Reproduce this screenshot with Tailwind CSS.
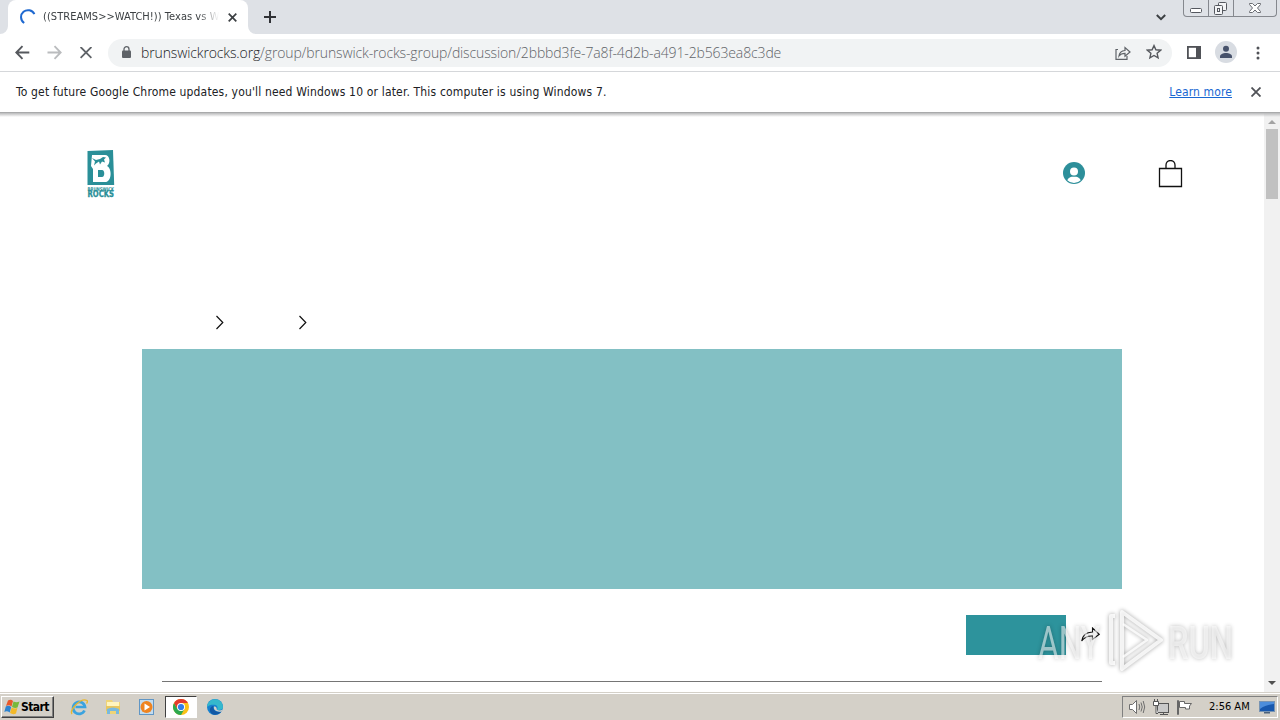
<!DOCTYPE html>
<html lang="en">

<head>
  <meta charset="UTF-8" />
  <meta name="viewport" content="width=device-width, initial-scale=1.0" />
  <title>Brunswick Rocks — Discussion</title>
  <script src="https://cdn.jsdelivr.net/npm/@tailwindcss/browser@4"></script>
</head>

<body class="flex h-[720px] w-[1280px] flex-col overflow-hidden bg-white font-['DejaVu_Sans_Condensed','DejaVu_Sans',sans-serif] text-[12px] text-[#202124]">

  <!-- Tab strip -->
  <header class="relative flex h-[34px] shrink-0 items-start bg-[#dee1e6] pl-2">
    <div class="relative flex h-[34px] w-[240px] items-center rounded-t-lg bg-white pl-3">
      <svg class="absolute -left-2 bottom-0 h-2 w-2" viewBox="0 0 8 8" fill="#fff"><path d="M8 0v8H0a8 8 0 0 0 8-8"/></svg>
      <svg class="absolute -right-2 bottom-0 h-2 w-2" viewBox="0 0 8 8" fill="#fff"><path d="M0 0v8h8a8 8 0 0 1-8-8"/></svg>
      <svg class="h-4 w-4 shrink-0" viewBox="0 0 16 16" fill="none" stroke="#1f69d0" stroke-width="2"><path d="M4.2 14A7 7 0 1 1 14.4 5.2"/></svg>
      <div class="ml-[7px] w-[176px] overflow-hidden whitespace-nowrap mask-r-from-88% mask-r-to-100% text-[11px] leading-4 tracking-[0.04px] text-[#3c4043]">((STREAMS&gt;&gt;WATCH!)) Texas vs W</div>
      <svg class="ml-[9px] h-[9px] w-[9px] shrink-0" viewBox="0 0 9 9" stroke="#3c4043" stroke-width="1.7"><path d="M.7.7l7.6 7.6M8.3.7L.7 8.3"/></svg>
    </div>
    <svg class="ml-4 mt-[11px] h-3 w-3" viewBox="0 0 12 12" stroke="#303236" stroke-width="2"><path d="M6 0v12M0 6h12"/></svg>
    <svg class="ml-auto mr-[17px] mt-[14px] h-[7px] w-[10px]" viewBox="0 0 10 7" fill="none" stroke="#3c4043" stroke-width="2"><path d="M.8 1L5 5.2 9.2 1"/></svg>
    <div class="mr-[3px] flex h-[17px] w-[94px] rounded-b-[4px] border border-t-0 border-[#85888e] bg-[#dfe2e7]">
      <div class="w-[25px] border-r border-[#85888e]">
        <svg class="h-4 w-6" viewBox="0 0 24 16" fill="#fff" stroke="#55585f"><rect x="6.500" y="8.500" width="11" height="4" rx="1"/></svg>
      </div>
      <div class="w-[25px] border-r border-[#85888e]">
        <svg class="h-4 w-6" viewBox="0 0 24 16" fill="#f3f4f6" stroke="#55585f"><rect x="9.500" y="2.500" width="8" height="8" rx="1"/><rect x="5.500" y="5.500" width="8" height="9" rx="1"/><rect x="8.500" y="8.500" width="2" height="3"/></svg>
      </div>
      <svg class="h-4 w-[42px]" viewBox="0 0 42 16" fill="#fff" stroke="#6a6d73"><path d="M15.500 3.500h3l2.500 2.500 2.500-2.500h3v1L23.500 8l3 3.500v1h-3L21 10l-2.500 2.500h-3v-1l3-3.500-3-3.500z"/></svg>
    </div>
  </header>

  <!-- Toolbar -->
  <div class="flex h-[38px] shrink-0 items-center border-b border-[#d5d7da] pl-[15px] pr-[20px]">
    <svg class="h-4 w-[15px]" viewBox="0 0 15 16" fill="none" stroke="#55585d" stroke-width="1.900"><path d="M14.300 7.500H1.500M7.500 1.200L1.300 7.500l6.200 6.300"/></svg>
    <svg class="ml-[17px] h-4 w-[15px]" viewBox="0 0 15 16" fill="none" stroke="#babcbe" stroke-width="1.800"><path d="M.5 7.500h13M7.500 1.200L13.700 7.500l-6.200 6.300"/></svg>
    <svg class="ml-[18px] h-3 w-3" viewBox="0 0 12 12" stroke="#5f6368" stroke-width="1.800"><path d="M.6 0l10.800 10.800M11.400 0L.6 10.800"/></svg>
    <div class="ml-4 flex h-7 w-[1064px] items-center rounded-full bg-[#f1f3f4] pl-[14px] pr-[11px]">
      <svg class="h-3 w-[9px] shrink-0 -translate-y-px" viewBox="0 0 9 12"><path d="M2 5V3.200a2.500 2.500 0 0 1 5 0V5" fill="none" stroke="#5f6368" stroke-width="1.300"/><rect y="4.500" width="9" height="7.500" rx="1" fill="#5f6368"/></svg>
      <div class="ml-[10px] whitespace-nowrap font-['Open_Sans','Noto_Sans',sans-serif] text-[14px] font-light tracking-[-0.129px] text-[#5f6368]"><span class="text-[#202124]">brunswickrocks.org</span>/group/brunswick-rocks-group/discussion/2bbbd3fe-7a8f-4d2b-a491-2b563ea8c3de</div>
      <svg class="ml-auto h-[14px] w-4 shrink-0" viewBox="0 0 16 14" fill="none" stroke="#5f6368" stroke-width="1.200"><path d="M3 3.500H1v9.800h11V10M4 10c.4-3.400 2-5.200 6-5.500V1.500L15 6l-5 4.200V7.400C7.400 7.400 5.500 8 4 10z"/></svg>
      <svg class="ml-6 -mr-[10px] h-4 w-4 shrink-0 -translate-x-[9px] -translate-y-px" viewBox="0 0 16 16" fill="none" stroke="#55585d" stroke-width="1.400"><path d="M8 1.600l1.900 4.200 4.700.4-3.500 3.100 1 4.600L8 11.500l-4.100 2.400 1-4.600L1.400 6.200l4.700-.4z"/></svg>
    </div>
    <svg class="ml-[15px] h-[13px] w-[14px]" viewBox="0 0 14 13"><rect x=".9" y=".9" width="12.200" height="11.200" fill="none" stroke="#505257" stroke-width="1.800"/><rect x="9" width="5" height="13" fill="#505257"/></svg>
    <svg class="ml-[14px] h-[22px] w-[22px] -translate-y-px" viewBox="0 0 22 22"><circle cx="11" cy="11" r="11" fill="#d8dce2"/><circle cx="11" cy="7.800" r="3" fill="#47526b"/><path d="M5 17v-1.500c0-2.300 3-3.500 6-3.500s6 1.200 6 3.500V17z" fill="#47526b"/></svg>
    <svg class="ml-auto h-[14px] w-[4px]" viewBox="0 0 4 14" fill="#505257"><circle cx="2" cy="2" r="1.500"/><circle cx="2" cy="7" r="1.500"/><circle cx="2" cy="12" r="1.500"/></svg>
  </div>

  <!-- Update notice -->
  <div class="flex h-[40px] shrink-0 items-center pl-4 pr-[19px]">
    <p class="whitespace-nowrap tracking-[0.165px]">To get future Google Chrome updates, you'll need Windows 10 or later. This computer is using Windows 7.</p>
    <a href="#" class="ml-auto whitespace-nowrap tracking-[0.12px] text-[#1967d2] underline">Learn more</a>
    <svg class="ml-[19px] h-[10px] w-[10px]" viewBox="0 0 10 10" stroke="#505257" stroke-width="1.800"><path d="M.5.5l9 9M9.500.5l-9 9"/></svg>
  </div>

  <!-- Page -->
  <div class="relative flex h-[580px] shrink-0 overflow-hidden border-t border-[#a9aaab]">
    <div class="absolute inset-x-0 top-0 h-[4px] bg-linear-to-b from-[#b9babb] to-transparent"></div>
    <main class="w-[1264px]">
      <div class="flex h-[122px] items-center pl-[87px] pr-[81px]">
        <svg class="h-[48px] w-[28px] overflow-visible" viewBox="0 0 28 48">
          <path d="M.5 1L26 0l1.200 35H.5z" fill="#2a8f98"/>
          <path d="M5 5h13c5 0 6 8 2 11 5 2 5 15-1 16H6V19l-2-3z" fill="#fff"/>
          <path d="M11 20h4c3 0 3 7 0 7h-4z" fill="#2a8f98"/>
          <path d="M5 8l4 2 4-1 3-2 3 .5-2 2 1 3-3-1-2 3-1-3-3 2-2 2 1-4z" fill="#2a8f98"/>
          <text x=".5" y="40.500" font-size="5.200" font-weight="bold" textLength="26.500" lengthAdjust="spacingAndGlyphs" fill="#2a8f98" font-family="DejaVu Sans">BRUNSWICK</text>
          <text x=".5" y="47" font-size="8" font-weight="bold" textLength="26.500" lengthAdjust="spacingAndGlyphs" fill="#2a8f98" stroke="#2a8f98" stroke-width=".3" font-family="DejaVu Sans">ROCKS</text>
        </svg>
        <svg class="ml-auto h-[22px] w-[22px] -translate-y-px" viewBox="0 0 22 22"><circle cx="11" cy="11" r="11" fill="#2d8f9a"/><circle cx="11" cy="9.500" r="4" fill="#fff"/><path d="M4.300 18.200c2-3.600 4.200-3.400 6.700-3.400s4.700-.2 6.700 3.400A9.800 9.800 0 0 1 11 21a9.800 9.800 0 0 1-6.700-2.800z" fill="#fff"/></svg>
        <svg class="ml-[73px] h-7 w-[25px]" viewBox="0 0 25 28" fill="none" stroke="#111" stroke-width="1.300"><path d="M1.500 8.500h22v18h-22zM8 8V5a4.500 4.500 0 0 1 9 0v3"/></svg>
      </div>

      <!-- Breadcrumbs -->
      <div class="flex h-[114px] items-end gap-[75px] pb-[19px] pl-[216px]">
        <svg class="h-[15px] w-2" viewBox="0 0 8 15" fill="none" stroke="#111" stroke-width="1.200"><path d="M.5 1l6.300 6.500L.5 14"/></svg>
        <svg class="h-[15px] w-2" viewBox="0 0 8 15" fill="none" stroke="#111" stroke-width="1.200"><path d="M.5 1l6.300 6.500L.5 14"/></svg>
      </div>

      <!-- Group cover -->
      <div class="ml-[142px] h-[240px] w-[980px] bg-[#83c0c4]"></div>
      <div class="ml-[162px] flex h-[93px] w-[940px] items-start border-b border-[#757575] pt-[26px]">
        <button class="ml-[804px] h-10 w-[100px] bg-[#2d939c]" aria-label="Join"></button>
        <svg class="ml-[15px] mt-3 h-[15px] w-[19px]" viewBox="0 0 19 15" fill="#fff" stroke="#111" stroke-width="1.100"><path d="M.7 14C1.500 8.500 5 5.200 11.500 5V1l6.700 6.300-6.700 5.200V9C7 8.800 3.500 10 .7 14z"/></svg>
      </div>
    </main>

    <!-- Scrollbar -->
    <aside class="flex w-4 flex-col items-center bg-[#f1f1f1]">
      <svg class="mt-[7px] h-1 w-2" viewBox="0 0 8 4" fill="#a3a3a3"><path d="M0 4l4-4 4 4z"/></svg>
      <div class="mt-[5px] h-[70px] w-3 bg-[#c1c1c1]"></div>
      <svg class="mb-[7px] mt-auto h-1 w-2" viewBox="0 0 8 4" fill="#505050"><path d="M0 0l4 4 4-4z"/></svg>
    </aside>

    <!-- Watermark -->
    <svg class="absolute left-[1030px] top-[492px] h-[72px] w-[220px] drop-shadow-[0_0_2px_rgba(0,0,0,0.45)]" viewBox="0 0 220 72" fill="#fff" fill-opacity=".55" font-family="Roboto, sans-serif" font-size="46">
      <text x="8" y="54" textLength="62" lengthAdjust="spacingAndGlyphs">ANY</text>
      <text x="138" y="54" font-weight="500" textLength="65" lengthAdjust="spacingAndGlyphs">RUN</text>
      <g fill="none" stroke="#fff" stroke-opacity=".8" stroke-width="4" stroke-linejoin="round">
        <path d="M85 11h-4v47h4M92 7l39 28-39 29z"/>
        <path d="M93 19l24 16-24 17" stroke-width="2.500"/>
      </g>
    </svg>
  </div>

  <!-- Taskbar -->
  <footer class="flex h-[28px] shrink-0 items-center border-t border-[#d4d0c8] bg-[#d4d0c8] pl-px pr-[2px] text-black shadow-[inset_0_1px_0_#fff]">
    <button class="mt-px flex h-[22px] w-[53px] items-center border border-[#404040] border-l-white border-t-white bg-[#d4d0c8] pl-[2px] shadow-[inset_-1px_-1px_0_#808080]">
      <svg class="h-4 w-4 shrink-0" viewBox="0 0 16 16"><path d="M4 1.500q3-1.500 5 .5L7.500 7.500Q5 5.500 2 7z" fill="#e8582a"/><path d="M9.500 2.500q3 1.500 6 0L13.500 8.500Q11 9.500 8 8z" fill="#78b83a"/><path d="M1.800 7.500Q4.500 6 7.200 8l-1.500 5.500Q3 11.500 .3 13z" fill="#2c83d0"/><path d="M7.700 8.500q3 1.500 5.700.5L12 14.500q-3 1.500-6-.5z" fill="#f3b929"/></svg>
      <span class="ml-px text-[12px] font-bold tracking-[-0.6px]">Start</span>
    </button>
    <svg class="ml-4 h-[18px] w-[18px]" viewBox="0 0 18 18" fill="none"><path d="M14.500 12.500A6 6 0 1 1 15 9H5.500" stroke="#3ba3df" stroke-width="2.700"/><path d="M2 16C-1 12 11-1 17 2.500c.8 1 .3 2-.5 3" stroke="#e9b72f" stroke-width="1.300"/></svg>
    <svg class="ml-[16px] h-[18px] w-[18px]" viewBox="0 0 18 18"><path d="M2 2h6l1 2h7v12H2z" fill="#efd477"/><path d="M3 4h12v5H3z" fill="#fff4bd"/><path d="M2 8h14v5H2z" fill="#e8c65f"/><path d="M3 16v-5q6-3 12 0v5h-3v-3H6v3z" fill="#78b9df"/></svg>
    <svg class="ml-[16px] h-[18px] w-[18px]" viewBox="0 0 18 18"><rect x="1.500" y="1.500" width="14" height="15" fill="#c3dcef" stroke="#6096c5"/><circle cx="8.500" cy="9" r="6" fill="#ef8420"/><path d="M6.500 5.500L12 9l-5.500 3.500z" fill="#fff"/></svg>
    <div class="ml-[9px] mt-px flex h-[22px] w-8 items-center justify-center border border-[#404040] border-b-white border-r-white bg-white">
      <svg class="h-4 w-4" viewBox="0 0 16 16"><circle cx="8" cy="8" r="8" fill="#fbc116"/><path d="M1.070 4A8 8 0 0 0 8 16l3.500-6H4.500z" fill="#2da94f"/><path d="M1.070 4A8 8 0 0 1 14.930 4H8l-3.500 6z" fill="#e33b2e"/><circle cx="8" cy="8" r="4" fill="#fff"/><circle cx="8" cy="8" r="3.100" fill="#327ee8"/></svg>
    </div>
    <svg class="ml-[9px] h-[18px] w-[18px]" viewBox="0 0 18 18"><circle cx="9" cy="9" r="8" fill="#1681cf"/><path d="M1.300 7A8 8 0 0 1 17 9c0 3-3.500 3.500-6 2.700 1-1.200 1-4.700-2.500-5C5 6.500 3 7 1.300 9z" fill="#35b8cc"/><path d="M7.500 8c-1 4 3 7 8 5.500C11 19 3 17 4 11c.3-1.500 1.500-3 3.500-3z" fill="#1258a5"/><path d="M8 8.500c2-.5 3 1.500 2.700 3 1.800 1.500 4.500 1 6 0l-1 2C11 14.500 7 12 8 8.500z" fill="#d4d0c8"/></svg>

    <!-- Tray -->
    <div class="ml-auto mt-px flex h-[22px] w-[156px] items-center border border-[#808080] border-b-white border-r-white pl-[5px]">
      <svg class="h-[16px] w-[18px]" viewBox="0 0 18 16" fill="#fff" stroke="#6e6e6e"><path d="M1.500 5.500h3L8.500 1.500v13l-4-4h-3z"/><path d="M11 5q1.500 3 0 6M13 3.500q2.500 4.500 0 9M15.200 2q3 6 0 12" fill="none"/></svg>
      <svg class="ml-[7px] h-[17px] w-[17px]" viewBox="0 0 17 17" fill="#fff" stroke="#555"><rect x="4.500" y="4.500" width="11" height="9" fill="#c9c9c9"/><path d="M7 15.500h8M10.500 14v1"/><path d="M.5 2.500h5v4h-5zM1.500 0v2.500M4.500 0v2.500M3 6.500v8h2"/></svg>
      <svg class="ml-[6px] h-[16px] w-[17px]" viewBox="0 0 17 16" fill="#fff" stroke="#666"><path d="M2.500 15.500v-14h-1v14zM3.500 2.500h5v2h7l-2 2.500v3h-4v-1.500h-6z"/></svg>
      <span class="ml-[16px] whitespace-nowrap text-[11px]">2:56 AM</span>
      <svg class="ml-auto mr-[2px] h-[14px] w-4" viewBox="0 0 16 14"><rect x=".5" y="1.500" width="15" height="10" fill="#1858ae" stroke="#7894b3"/><path d="M1 2h14v2Q6 5 1 9z" fill="#4c8ddb"/><path d="M5 12h6v1.500H5z" fill="#4c627c"/></svg>
    </div>
  </footer>

</body>

</html>
